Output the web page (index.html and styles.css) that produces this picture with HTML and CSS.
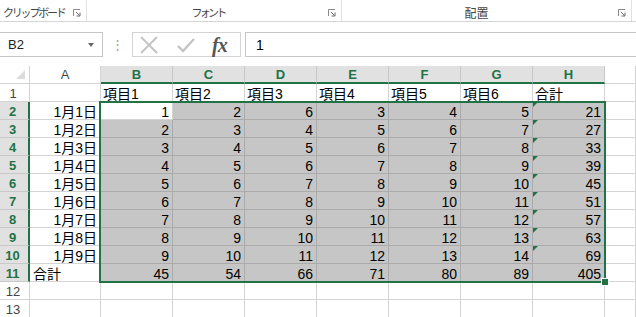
FILE: index.html
```html
<!DOCTYPE html>
<html lang="ja">
<head>
  <meta charset="UTF-8">
  <title>Book1 - Excel</title>
  <link rel="stylesheet" href="styles.css">
</head>
<body>

  <div class="ribbon">
    <div class="group group-clip">
      <span class="group-label">クリップボード</span>
      <svg class="launcher" width="8" height="8" viewBox="0 0 8 8"><path d="M0.5 7V0.5H7" fill="none" stroke="#8a8a8a"/><path d="M3 3L6.5 6.5M7 3.5V7H3.5" fill="none" stroke="#6a6a6a"/></svg>
    </div>
    <div class="group group-font">
      <span class="group-label">フォント</span>
      <svg class="launcher" width="8" height="8" viewBox="0 0 8 8"><path d="M0.5 7V0.5H7" fill="none" stroke="#8a8a8a"/><path d="M3 3L6.5 6.5M7 3.5V7H3.5" fill="none" stroke="#6a6a6a"/></svg>
    </div>
    <div class="group group-align">
      <span class="group-label">配置</span>
      <svg class="launcher" width="8" height="8" viewBox="0 0 8 8"><path d="M0.5 7V0.5H7" fill="none" stroke="#8a8a8a"/><path d="M3 3L6.5 6.5M7 3.5V7H3.5" fill="none" stroke="#6a6a6a"/></svg>
    </div>
  </div>

  <div class="formula-bar">
    <div class="name-box">
      <span>B2</span>
      <span class="drop-arrow"></span>
    </div>
    <div class="dots">⋮</div>
    <div class="fx-buttons">
      <svg width="20" height="18" viewBox="0 0 20 18"><path d="M2 1L18 17M18 1L2 17" stroke="#c4c4c4" stroke-width="2"/></svg>
      <svg width="20" height="18" viewBox="0 0 20 18"><path d="M2 10L7 15L18 3" fill="none" stroke="#c4c4c4" stroke-width="2.4"/></svg>
      <span class="fx">fx</span>
    </div>
    <div class="formula-input">1</div>
  </div>

  <div class="sheet">
    <div class="grid">
      <!-- header row -->
      <div class="corner"><span class="select-all"></span></div>
      <div class="col-head">A</div>
      <div class="col-head active">B</div>
      <div class="col-head active">C</div>
      <div class="col-head active">D</div>
      <div class="col-head active">E</div>
      <div class="col-head active">F</div>
      <div class="col-head active">G</div>
      <div class="col-head active">H</div>
      <div class="col-head"></div>

      <!-- row 1 -->
      <div class="row-head">1</div>
      <div class="cell"></div>
      <div class="cell">項目1</div>
      <div class="cell">項目2</div>
      <div class="cell">項目3</div>
      <div class="cell">項目4</div>
      <div class="cell">項目5</div>
      <div class="cell">項目6</div>
      <div class="cell">合計</div>
      <div class="cell"></div>

      <!-- row 2 -->
      <div class="row-head active">2</div>
      <div class="cell num">1月1日</div>
      <div class="cell num current">1</div>
      <div class="cell num sel">2</div>
      <div class="cell num sel">6</div>
      <div class="cell num sel">3</div>
      <div class="cell num sel">4</div>
      <div class="cell num sel">5</div>
      <div class="cell num sel flag">21</div>
      <div class="cell"></div>

      <!-- row 3 -->
      <div class="row-head active">3</div>
      <div class="cell num">1月2日</div>
      <div class="cell num sel">2</div>
      <div class="cell num sel">3</div>
      <div class="cell num sel">4</div>
      <div class="cell num sel">5</div>
      <div class="cell num sel">6</div>
      <div class="cell num sel">7</div>
      <div class="cell num sel flag">27</div>
      <div class="cell"></div>

      <!-- row 4 -->
      <div class="row-head active">4</div>
      <div class="cell num">1月3日</div>
      <div class="cell num sel">3</div>
      <div class="cell num sel">4</div>
      <div class="cell num sel">5</div>
      <div class="cell num sel">6</div>
      <div class="cell num sel">7</div>
      <div class="cell num sel">8</div>
      <div class="cell num sel flag">33</div>
      <div class="cell"></div>

      <!-- row 5 -->
      <div class="row-head active">5</div>
      <div class="cell num">1月4日</div>
      <div class="cell num sel">4</div>
      <div class="cell num sel">5</div>
      <div class="cell num sel">6</div>
      <div class="cell num sel">7</div>
      <div class="cell num sel">8</div>
      <div class="cell num sel">9</div>
      <div class="cell num sel flag">39</div>
      <div class="cell"></div>

      <!-- row 6 -->
      <div class="row-head active">6</div>
      <div class="cell num">1月5日</div>
      <div class="cell num sel">5</div>
      <div class="cell num sel">6</div>
      <div class="cell num sel">7</div>
      <div class="cell num sel">8</div>
      <div class="cell num sel">9</div>
      <div class="cell num sel">10</div>
      <div class="cell num sel flag">45</div>
      <div class="cell"></div>

      <!-- row 7 -->
      <div class="row-head active">7</div>
      <div class="cell num">1月6日</div>
      <div class="cell num sel">6</div>
      <div class="cell num sel">7</div>
      <div class="cell num sel">8</div>
      <div class="cell num sel">9</div>
      <div class="cell num sel">10</div>
      <div class="cell num sel">11</div>
      <div class="cell num sel flag">51</div>
      <div class="cell"></div>

      <!-- row 8 -->
      <div class="row-head active">8</div>
      <div class="cell num">1月7日</div>
      <div class="cell num sel">7</div>
      <div class="cell num sel">8</div>
      <div class="cell num sel">9</div>
      <div class="cell num sel">10</div>
      <div class="cell num sel">11</div>
      <div class="cell num sel">12</div>
      <div class="cell num sel flag">57</div>
      <div class="cell"></div>

      <!-- row 9 -->
      <div class="row-head active">9</div>
      <div class="cell num">1月8日</div>
      <div class="cell num sel">8</div>
      <div class="cell num sel">9</div>
      <div class="cell num sel">10</div>
      <div class="cell num sel">11</div>
      <div class="cell num sel">12</div>
      <div class="cell num sel">13</div>
      <div class="cell num sel flag">63</div>
      <div class="cell"></div>

      <!-- row 10 -->
      <div class="row-head active">10</div>
      <div class="cell num">1月9日</div>
      <div class="cell num sel">9</div>
      <div class="cell num sel">10</div>
      <div class="cell num sel">11</div>
      <div class="cell num sel">12</div>
      <div class="cell num sel">13</div>
      <div class="cell num sel">14</div>
      <div class="cell num sel flag">69</div>
      <div class="cell"></div>

      <!-- row 11 -->
      <div class="row-head active">11</div>
      <div class="cell label">合計</div>
      <div class="cell num sel">45</div>
      <div class="cell num sel">54</div>
      <div class="cell num sel">66</div>
      <div class="cell num sel">71</div>
      <div class="cell num sel">80</div>
      <div class="cell num sel">89</div>
      <div class="cell num sel">405</div>
      <div class="cell"></div>

      <!-- row 12 -->
      <div class="row-head">12</div>
      <div class="cell"></div>
      <div class="cell"></div>
      <div class="cell"></div>
      <div class="cell"></div>
      <div class="cell"></div>
      <div class="cell"></div>
      <div class="cell"></div>
      <div class="cell"></div>
      <div class="cell"></div>

      <!-- row 13 -->
      <div class="row-head">13</div>
      <div class="cell"></div>
      <div class="cell"></div>
      <div class="cell"></div>
      <div class="cell"></div>
      <div class="cell"></div>
      <div class="cell"></div>
      <div class="cell"></div>
      <div class="cell"></div>
      <div class="cell"></div>
    </div>

    <!-- selection range B2:H11 -->
    <div class="selection"><span class="fill-handle"></span></div>
  </div>

</body>
</html>
```

FILE: styles.css
```css
body {
  margin: 0;
  background: #fff;
  font-family: "Liberation Sans", "Noto Sans CJK JP", sans-serif;
  color: #000;
  overflow: hidden;
}

/* ribbon group labels */
.ribbon {
  display: flex;
  height: 22px;
  border-bottom: 1px solid #d5d5d5;
  box-sizing: border-box;
}
.group {
  position: relative;
  height: 21px;
  padding-top: 3px;
  border-right: 1px solid #e1e1e1;
  box-sizing: border-box;
  display: flex;
  align-items: center;
  font-family: "Noto Sans CJK JP", sans-serif;
  font-size: 11px;
  color: #444;
}
.group-clip {
  width: 87px;
  padding-left: 3px;
}
.group-clip .group-label {
  letter-spacing: -2.2px;
}
.group-font {
  width: 255px;
  justify-content: center;
  padding-right: 12px;
}
.group-font .group-label {
  letter-spacing: -2.8px;
}
.group-align {
  width: 290px;
  justify-content: center;
  padding-right: 20px;
  font-size: 12px;
}
.launcher {
  position: absolute;
  right: 5px;
  top: 9px;
}

/* formula bar */
.formula-bar {
  display: flex;
  align-items: flex-start;
  height: 44px;
  padding-top: 10px;
  box-sizing: border-box;
}
.name-box {
  width: 104px;
  height: 25px;
  margin-left: -1px;
  border: 1px solid #c6c6c6;
  box-sizing: border-box;
  display: flex;
  align-items: center;
  justify-content: space-between;
  padding: 0 8px 0 8px;
  font-size: 13px;
  color: #222;
}
.drop-arrow {
  width: 0;
  height: 0;
  border-left: 3.5px solid transparent;
  border-right: 3.5px solid transparent;
  border-top: 4px solid #666;
}
.dots {
  width: 29px;
  height: 25px;
  line-height: 25px;
  text-align: center;
  color: #a0a0a0;
  font-size: 13px;
}
.fx-buttons {
  width: 109px;
  height: 25px;
  border: 1px solid #d4d4d4;
  box-sizing: border-box;
  display: flex;
  align-items: center;
  gap: 17px;
  padding-left: 6px;
}
.fx {
  font-family: "Liberation Serif", serif;
  font-style: italic;
  font-weight: bold;
  font-size: 20px;
  line-height: 20px;
  color: #555;
  letter-spacing: -1px;
  margin-left: -1px;
}
.formula-input {
  flex: 1;
  height: 25px;
  margin-left: 4px;
  margin-right: -2px;
  border: 1px solid #c6c6c6;
  box-sizing: border-box;
  display: flex;
  align-items: center;
  padding-left: 10px;
  font-size: 14px;
}

/* worksheet */
.sheet {
  position: relative;
}
.grid {
  display: grid;
  grid-template-columns: 30px 71px repeat(7, 72px) 1fr;
  grid-auto-rows: 18px;
}
.grid > div {
  box-sizing: border-box;
  border-right: 1px solid #d4d4d4;
  border-bottom: 1px solid #d4d4d4;
  line-height: 18px;
  white-space: nowrap;
  overflow: hidden;
}
.corner {
  position: relative;
}
.select-all {
  position: absolute;
  right: 4px;
  bottom: 4px;
  width: 0;
  height: 0;
  border-left: 9px solid transparent;
  border-bottom: 9px solid #dcdcdc;
}
.col-head {
  text-align: center;
  font-size: 13px;
  color: #444;
}
.grid > .col-head.active {
  background: #e1e1e1;
  color: #217346;
  font-weight: bold;
  border-right-color: #c8c8c8;
  border-bottom: 2px solid #217346;
}
.row-head {
  text-align: center;
  font-size: 13px;
  color: #444;
  padding-top: 1px;
  padding-right: 3px;
}
.grid > .row-head.active {
  background: #e1e1e1;
  color: #217346;
  font-weight: bold;
  border-right: 2px solid #217346;
  border-bottom-color: #c8c8c8;
}
.cell {
  font-size: 14px;
  padding: 1px 3px 0 2px;
}
.num {
  text-align: right;
}
.label {
  padding-left: 3px;
}
.grid > .sel {
  background: #c6c6c6;
  border-right-color: #ababab;
  border-bottom-color: #ababab;
}
.flag {
  position: relative;
}
.flag::before {
  content: "";
  position: absolute;
  left: 0;
  top: 0;
  border-top: 5px solid #217346;
  border-right: 5px solid transparent;
}

.selection {
  position: absolute;
  left: 99px;
  top: 35px;
  width: 507px;
  height: 182px;
  border: 2px solid #217346;
  box-sizing: border-box;
  pointer-events: none;
}
.fill-handle {
  position: absolute;
  right: -5px;
  bottom: -5px;
  width: 6px;
  height: 6px;
  background: #217346;
  border: 1px solid #fff;
}
```
